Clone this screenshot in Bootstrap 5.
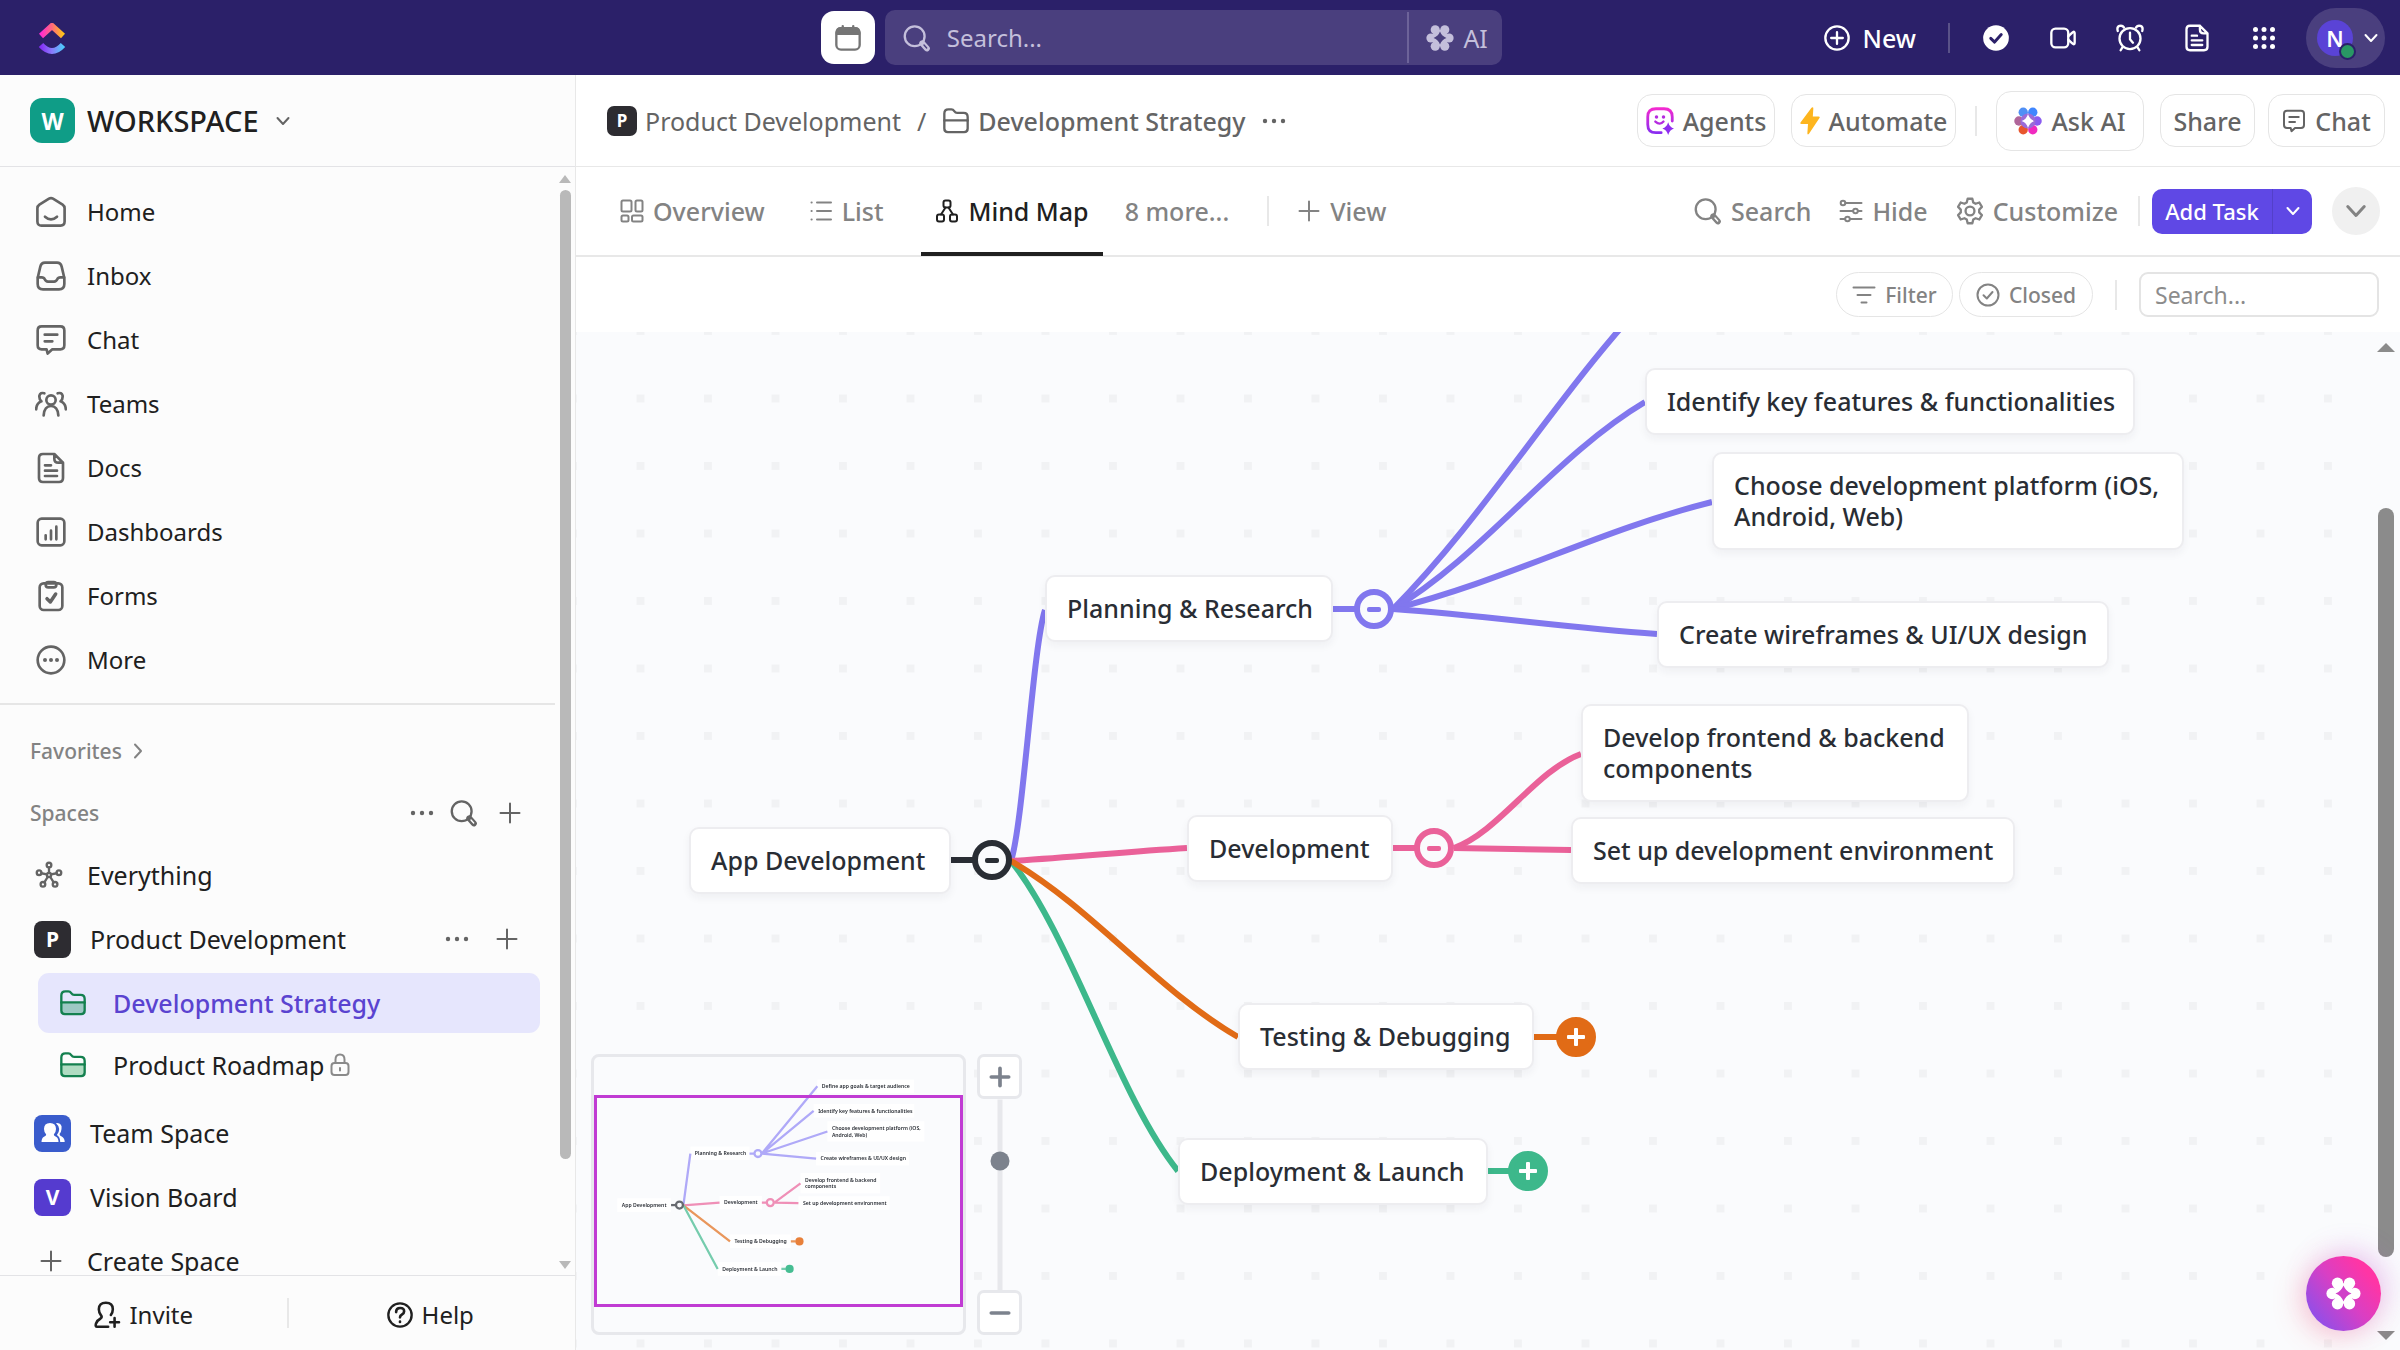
<!DOCTYPE html>
<html lang="en">
<head>
<meta charset="utf-8">
<meta name="viewport" content="width=device-width, initial-scale=1">
<title>Development Strategy | Mind Map</title>
<link href="https://cdn.jsdelivr.net/npm/bootstrap@5.3.0/dist/css/bootstrap.min.css" rel="stylesheet">
<style>
  :root { --ink: #202020; --mid: #646464; --soft: #838383; --line: #e8e8e8; --brand: #5f48e5; }
  body { font-family: "Noto Sans", "Open Sans", sans-serif; font-size: 25px; line-height: 32px; color: var(--ink); background: #fff; }
  a { color: inherit; text-decoration: none; }
  .btn { --bs-btn-font-size: 25px; --bs-btn-line-height: 32px; --bs-btn-padding-x: 0; --bs-btn-padding-y: 0; --bs-btn-color: inherit; --bs-btn-border-width: 0; display: inline-flex; align-items: center; white-space: nowrap; }
  .ico { width: 28px; height: 28px; flex: none; fill: none; stroke: currentColor; stroke-width: 2; stroke-linecap: round; stroke-linejoin: round; }
  .ico-lg { width: 32px; height: 32px; }
  .ico-sm { width: 24px; height: 24px; }
  .ico-xs { width: 16px; height: 16px; }
  .medium { font-weight: 500; }
  .vline { width: 2px; height: 30px; background: var(--line); flex: none; }
  .dim { color: var(--mid); }

  /* top bar */
  .topbar { height: 75px; background: #2b2069; color: #fff; flex: none; }
  .top-left { flex: 0 0 34.2%; padding-left: 36px; }
  .top-mid { flex: 0 0 28.4%; gap: 10px; }
  .top-right { flex: 1 1 0; padding-right: 15px; }
  .cal-btn { width: 54px; height: 53px; border-radius: 13px; background: #fff; color: #757575; justify-content: center; }
  .top-search { height: 55px; border-radius: 10px; background: #4a3f7e; color: #c4bfdb; --core: #4a3f7e; padding-left: 18px; }
  .top-search input { background: none; border: 0; outline: 0; color: inherit; font-size: 24px; min-width: 0; padding: 0; }
  .top-search input::placeholder { color: #c4bfdb; opacity: 1; }
  .ai-btn { height: 51px; border-left: 2px solid #6d6399 !important; border-radius: 0; width: 95px; gap: 9px; padding-left: 17px; color: #c4bfdb; --hole: #4a3f7e; }
  .new-btn { gap: 12px; }
  .top-apps { gap: 39px; }
  .top-apps a { width: 28px; display: flex; justify-content: center; }
  .who { height: 60px; border-radius: 30px; width: 79px; background: #4a3f7e; padding-left: 11px; gap: 6px; }
  .who-face { width: 36px; height: 36px; border-radius: 50%; background: #5a43d6; font-weight: 600; font-size: 22px; position: relative; color: #fff; }
  .who-dot { position: absolute; right: -3px; bottom: -4px; width: 17px; height: 17px; border-radius: 50%; border: 2px solid #2b2069; background: #299764; }

  /* sidebar */
  .side { width: 24%; background: #fcfcfc; border-right: 1px solid var(--line); }
  .side-head { height: 92px; border-bottom: 1px solid #e3e3e6; padding-left: 30px; gap: 12px; font-size: 29px; }
  .tile { width: 37px; height: 37px; border-radius: 8px; color: #fff; font-weight: 700; font-size: 21px; flex: none; display: flex; align-items: center; justify-content: center; }
  .tile-w { width: 45px; height: 45px; border-radius: 12px; background: #0f9d87; font-size: 23px; }
  .tile-p { background: #2d2c31; } .tile-t { background: #3a5ccc; } .tile-v { background: #553bcf; }
  .side-scroll { overflow: hidden; }
  .side-row { height: 64px; padding-left: 35px; gap: 20px; width: 100%; }
  .side-row .ico { color: var(--mid); }
  .side-nav { font-size: 24px; padding-top: 13px; }
  .side-rule { height: 2px; background: #e6e6e6; margin: 11px 0 14px; }
  .side-sec { height: 64px; padding: 0 33px 0 30px; font-size: 21px; color: var(--soft); }
  .side-sec-tight { height: 60px; }
  .side-tools { gap: 16px; color: var(--mid); }
  .space-tools { gap: 26px; padding-right: 36px; }
  .space-row { height: 64px; padding-left: 34px; gap: 19px; }
  .folder-row { height: 60px; margin: 2px 15px 2px 38px; border-radius: 11px; padding-left: 21px; gap: 26px; }
  .folder-row + .space-row { margin-top: 6px; }
  .folder-row.is-open { background: #e6e6fd; color: #5a43d0; }
  .folder-row.is-open .ico-folder { --tint: #9dc8c4; }
  .ico-folder { color: #14804f; --tint: #b0dcc2; }
  .ico-lock { color: #8a8a8a; }
  .side-foot { height: 75px; border-top: 1px solid #e3e3e6; }
  .side-foot .btn { gap: 8px; font-size: 24px; }
  .sb-thin { width: 20px; padding: 8px 4px 6px; gap: 7px; flex: none; }
  .sb-thin .tri { border: 6px solid transparent; border-top: 0; border-bottom: 8px solid #b9b9b9; width: 0; align-self: center; }
  .sb-thin .tri.down { transform: rotate(180deg); margin-top: auto; }
  .sb-thin .thumb { width: 11px; border-radius: 6px; background: #b9b9b9; flex: 0 0 88.6%; align-self: center; }

  /* header */
  .crumb-bar { height: 92px; border-bottom: 1px solid var(--line); padding: 0 15px 0 31px; color: var(--mid); flex: none; }
  .crumb-tools .vline { margin: 0 19px; }
  .tile-xs { width: 30px; height: 30px; font-size: 17px; border-radius: 7px; }
  .pill-btn { height: 53px; border-radius: 15px; background: #fff; color: var(--mid); justify-content: center; gap: 9px; font-weight: 500; }
  .pill-btn.btn { --bs-btn-border-width: 1px; --bs-btn-border-color: #e5e5e5; }
  .pill-tall { height: 60px; }
  .w-agents { width: 138px; } .w-auto2 { width: 165px; } .w-ask { width: 148px; } .w-share { width: 95px; margin-right: 13px; } .w-chat { width: 117px; }

  .tab-bar { height: 90px; border-bottom: 2px solid var(--line); padding: 0 20px 0 30px; color: var(--soft); font-weight: 500; flex: none; }
  .tab-item { height: 90px; padding: 0 14px; display: flex; align-items: center; gap: 9px; white-space: nowrap; }
  .tab-item.active { color: #202020; border-bottom: 4px solid #202020; padding-top: 4px; }
  .tab-tools .btn { color: var(--soft); gap: 9px; font-weight: 500; }
  .add-group .btn { background: var(--brand); color: #fff; height: 45px; font-size: 22px; justify-content: center; }
  .add-group .add-main { width: 121px; border-radius: 10px 0 0 10px; border-right: 1px solid #5340c9; }
  .add-group .add-more { width: 39px; border-radius: 0 10px 10px 0; }
  .round-btn { width: 48px; height: 48px; border-radius: 50%; background: #f0f0f0; justify-content: center; }

  .filter-bar { height: 75px; padding-right: 21px; gap: 6px; color: var(--soft); flex: none; }
  .chip { height: 45px; border-radius: 23px; --bs-btn-border-width: 1px; --bs-btn-border-color: #e5e5e5; gap: 9px; font-size: 21px; font-weight: 500; justify-content: center; color: var(--soft); }
  .chip-a { width: 117px; } .chip-b { width: 134px; }
  .filter-input { width: 240px; height: 45px; border: 2px solid #e4e4e4; border-radius: 9px; font-size: 23px; padding: 0 14px; }
  .filter-input::placeholder { color: #8c8c8c; }

  /* mind map canvas */
  .map { position: relative; overflow: hidden; background-color: #fafbfd; }
  .map-dots, .map-lines { position: absolute; left: 0; top: 0; width: 100%; height: 100%; }
  .node { position: absolute; background: #fff; border: 2px solid #ededf0; border-radius: 10px; box-shadow: 0 4px 8px rgba(40,40,60,.05); padding: 16px 0 16px 20px; line-height: 31px; font-weight: 500; color: #292d34; white-space: nowrap; }
  .n-app { left: 113px; top: 495px; width: 262px; }
  .n-plan { left: 469px; top: 243px; width: 288px; }
  .n-dev { left: 611px; top: 483px; width: 206px; }
  .n-test { left: 662px; top: 671px; width: 296px; }
  .n-deploy { left: 602px; top: 806px; width: 310px; }
  .n-ident { left: 1069px; top: 36px; width: 490px; }
  .n-choose { left: 1136px; top: 120px; width: 472px; }
  .n-wire { left: 1081px; top: 269px; width: 452px; }
  .n-front { left: 1005px; top: 372px; width: 388px; }
  .n-setup { left: 995px; top: 485px; width: 444px; }
  .knot { position: absolute; width: 40px; height: 40px; border-radius: 50%; border: 6px solid var(--c); background: #fafbfd; padding: 0; display: flex; align-items: center; justify-content: center; }
  .knot::before { content: ""; width: 14px; height: 5px; border-radius: 2px; background: var(--c); }
  .knot.full { background: var(--c); }
  .knot.full::before, .knot.full::after { content: ""; position: absolute; width: 18px; height: 4px; background: #fff; border-radius: 1px; }
  .knot.full::after { width: 4px; height: 18px; }
  .c-ink { --c: #292d34; } .c-vio { --c: #8177ee; } .c-pink { --c: #ea6199; } .c-or { --c: #e16b16; } .c-gr { --c: #3db88b; }
  .k-app { left: 396px; top: 508px; } .k-plan { left: 778px; top: 257px; } .k-dev { left: 838px; top: 496px; }
  .k-test { left: 980px; top: 685px; } .k-deploy { left: 932px; top: 819px; }

  .map-dock { position: absolute; left: 15px; bottom: 15px; gap: 11px; }
  .mini { width: 375px; height: 281px; border: 3px solid #e7e8ec; border-radius: 8px; background: #fafbfd; position: relative; overflow: hidden; }
  .mini svg { display: block; width: 100%; height: 100%; filter: blur(.6px); }
  .mini-view { position: absolute; left: 0; right: 0; top: 38px; height: 212px; border: 3px solid #c03bd3; }
  .zoomer { width: 45px; height: 281px; }
  .zoomer .btn { width: 45px; height: 45px; border: 3px solid #e7e8ec; border-radius: 7px; background: #fff; color: #7c828d; justify-content: center; flex: none; }
  .zoomer .btn .ico { stroke-width: 4; width: 22px; height: 22px; }
  .zoom-track { height: 191px; width: 45px; display: flex; align-items: center; justify-content: center; }
  .zoom-range { appearance: none; -webkit-appearance: none; width: 191px; height: 20px; flex: none; transform: rotate(-90deg); background: none; margin: 0; }
  .zoom-range::-webkit-slider-runnable-track { height: 5px; background: #e7e8ec; }
  .zoom-range::-webkit-slider-thumb { -webkit-appearance: none; width: 19px; height: 19px; border-radius: 50%; background: #7c828d; margin-top: -7px; }

  .sb-wide { position: absolute; right: 0; top: 0; bottom: 0; width: 28px; background: #fafbfd; padding: 11px 6px 10px 6px; }
  .sb-wide .tri { border: 9px solid transparent; border-top: 0; border-bottom: 9px solid #8b8b8b; }
  .sb-wide .tri.down { transform: rotate(180deg); margin-top: auto; }
  .sb-wide .thumb { width: 16px; border-radius: 8px; background: #8b8b8b; margin-top: 156px; flex: 0 0 749px; }
  .fab { position: absolute; right: 19px; bottom: 19px; width: 75px; height: 75px; border-radius: 50%; background: linear-gradient(50deg, #8052f0 5%, #d93fc4 50%, #ff35a5 80%); box-shadow: 6px -6px 28px rgba(190,90,230,.25), -6px 6px 28px rgba(255,80,100,.25); color: #fff; justify-content: center; --hole: #d040c8; }
  .fab.btn:hover { background: #d93fc4; }
  .fab .ico { width: 35px; height: 35px; }
</style>
<script src="https://cdn.jsdelivr.net/npm/bootstrap@5.3.0/dist/js/bootstrap.bundle.min.js"></script>
</head>
<body class="vh-100 d-flex flex-column overflow-hidden">

<svg width="0" height="0" class="position-absolute" aria-hidden="true">
  <defs>
    <linearGradient id="gWarm"><stop offset="0" stop-color="#ff2ad1"/><stop offset=".5" stop-color="#ff6a7a"/><stop offset="1" stop-color="#ffc21a"/></linearGradient>
    <linearGradient id="gCool"><stop offset="0" stop-color="#8530f5"/><stop offset=".5" stop-color="#8a7bfc"/><stop offset="1" stop-color="#4fc8fb"/></linearGradient>
    <linearGradient id="gAgent" x1="0" y1="0" x2="0" y2="1"><stop offset="0" stop-color="#f22ad0"/><stop offset="1" stop-color="#8a2df0"/></linearGradient>
    <symbol id="chev" viewBox="0 0 16 16"><path d="M2.500 5 8 11l5.500-6"/></symbol>
    <symbol id="chevr" viewBox="0 0 16 16"><path d="m5 1.500 6 6.500-6 6.500"/></symbol>
    <symbol id="dots" viewBox="0 0 24 24"><g fill="currentColor" stroke="none"><circle cx="3" cy="12" r="2.200"/><circle cx="12" cy="12" r="2.200"/><circle cx="21" cy="12" r="2.200"/></g></symbol>
    <symbol id="plus" viewBox="0 0 24 24"><path d="M12 2.500v19M2.500 12h19"/></symbol>
    <symbol id="minus" viewBox="0 0 24 24"><path d="M2.500 12h19"/></symbol>
    <symbol id="search" viewBox="0 0 24 24"><circle cx="10" cy="10.500" r="8.500"/><path d="m16.500 16.500 4 4.500" stroke-width="5"/><path d="m18 18 2.300 2.600" stroke="var(--core,#fff)" stroke-width="1.200"/></symbol>
    <symbol id="home" viewBox="0 0 24 24"><path d="M1.800 9.200c0-1.200.5-2 1.500-2.700L10.500 2q1.500-.9 3 0l7.200 4.500c1 .7 1.500 1.500 1.500 2.700v10c0 2-1.200 3-3 3H4.800c-1.800 0-3-1-3-3z"/><path d="M7.500 15.500q4.500 4 9 0"/></symbol>
    <symbol id="inbox" viewBox="0 0 24 24"><path d="M4 5q.7-3 3.500-3h9Q19.300 2 20 5l2 8.500V18q0 4-4 4H6q-4 0-4-4v-4.500z"/><path d="M2.200 13H5q1.700 0 2.300 1.500.7 1.700 2.400 1.700h4.600q1.700 0 2.400-1.700Q17.300 13 19 13h2.800"/></symbol>
    <symbol id="chat" viewBox="0 0 24 24"><path d="M5 1.800h14q3 0 3 3V16q0 3-3 3h-6l-3.500 3.200-.8-3.200H5q-3 0-3-3V4.800q0-3 3-3zM7.300 8h9.400M7.300 13H13"/></symbol>
    <symbol id="teams" viewBox="0 0 24 24"><circle cx="12" cy="9" r="3.500"/><path d="M6.500 20.500q.5-7 5.500-7t5.500 7M7 4Q4 3 3.300 5.700 3 8.500 4.800 10 1 11.500.9 16M17 4q3-1 3.700 1.700.3 2.800-1.500 4.300 3.800 1.500 3.900 6"/></symbol>
    <symbol id="doc" viewBox="0 0 24 24"><path d="M6 1.500h8.500L21 8v11.500q0 3-3 3H6q-3 0-3-3v-15q0-3 3-3zM14.500 1.500V5q0 3 3 3H21M7.500 10H12M7.500 14h9M7.500 18h9"/></symbol>
    <symbol id="dash" viewBox="0 0 24 24"><rect x="2" y="2" width="20" height="20" rx="3"/><path d="M8 17.500v-3M12 17.500V11M16 17.500V8"/></symbol>
    <symbol id="form" viewBox="0 0 24 24"><rect x="3.500" y="2.500" width="17" height="20" rx="3"/><rect x="8" y="1.500" width="8" height="4" rx="2"/><path d="m9 14 2.500 2.500 4-6" stroke-width="2.600"/></symbol>
    <symbol id="more" viewBox="0 0 24 24"><circle cx="12" cy="12" r="10"/><g fill="currentColor" stroke="none"><circle cx="7.500" cy="12" r="1.500"/><circle cx="12" cy="12" r="1.500"/><circle cx="16.500" cy="12" r="1.500"/></g></symbol>
    <symbol id="every" viewBox="0 0 24 24"><circle cx="12" cy="12" r="1.800"/><circle cx="12" cy="3.500" r="2"/><circle cx="3.500" cy="10" r="2"/><circle cx="20.500" cy="10" r="2"/><circle cx="6.800" cy="20" r="2"/><circle cx="17.200" cy="20" r="2"/><path d="M12 5.500v4.700M5.400 10.500l4.900 1M18.600 10.500l-4.900 1M8 18.300l3-4.800M16 18.300l-3-4.800"/></symbol>
    <symbol id="folder" viewBox="0 0 24 24"><path d="M2 11.500h20v7q0 3-3 3H5q-3 0-3-3z" fill="var(--tint,none)"/><path d="M2 11.500V5.500Q2 2 5.500 2H8q1.500 0 2.500 1.500T13 5h5.500Q22 5 22 8.500v3"/></symbol>
    <symbol id="lock" viewBox="0 0 24 24"><rect x="3.500" y="10" width="17" height="12" rx="3"/><path d="M7.500 10V6.500q0-5 4.500-5t4.500 5V10M12 15v2.500"/></symbol>
    <symbol id="invite" viewBox="0 0 24 24"><path d="M13 22H3.500Q1.800 22 2.500 19.500q1-3 4-4.500 1.500-1 .5-2.500Q5 10 5 7q0-5.500 6-5.500t6 5.500q0 2.500-1.700 5M18.500 14.500v7.500M14.700 18.200h7.600" stroke-width="2.200"/></symbol>
    <symbol id="help" viewBox="0 0 24 24"><circle cx="12" cy="12" r="10"/><path d="M8.700 9.500q0-3.500 3.500-3.500t3.300 3q0 1.700-1.800 2.500Q12 12.300 12 14M12 17.700v.3" stroke-width="2.300"/></symbol>
    <symbol id="cal" viewBox="0 0 24 24"><rect x="2" y="3.500" width="20" height="18.500" rx="4"/><path d="M2.500 8.500V7q0-3.500 3.500-3.500h12q3.500 0 3.500 3.500v1.500zM7.500 1.800v3M16.500 1.800v3" fill="currentColor"/></symbol>
    <symbol id="flower" viewBox="0 0 24 24"><g fill="currentColor" stroke="none"><circle cx="4.200" cy="12" r="3.900"/><circle cx="19.800" cy="12" r="3.900"/><circle cx="7.900" cy="5" r="3.900"/><circle cx="16.100" cy="5" r="3.900"/><circle cx="7.900" cy="19" r="3.900"/><circle cx="16.100" cy="19" r="3.900"/><circle cx="12" cy="12" r="7"/></g><path d="M12 6.500q1.500 4 5.500 5.500-4 1.500-5.500 5.500Q10.500 13.500 6.500 12q4-1.500 5.500-5.500z" fill="var(--hole)" stroke="none"/></symbol>
    <symbol id="pluscircle" viewBox="0 0 24 24"><circle cx="12" cy="12" r="10"/><path d="M12 7v10M7 12h10"/></symbol>
    <symbol id="donefill" viewBox="0 0 24 24"><circle cx="12" cy="12" r="11" fill="currentColor" stroke="none"/><path d="m7.500 12.300 3.300 3.200L16.500 9" stroke="#2b2069" stroke-width="2.500"/></symbol>
    <symbol id="video" viewBox="0 0 24 24"><rect x="2" y="4" width="14.500" height="16" rx="3.500"/><path d="M16.500 10.500 20.500 7q1.500-1 1.500 1v8q0 2-1.500 1l-4-3.500"/></symbol>
    <symbol id="alarm" viewBox="0 0 24 24"><circle cx="12" cy="12.500" r="9"/><path d="M12 7.500v5.500l2.500 3M1.500 6Q.5 2.500 3 1.700 5.500 1 6.800 3M22.500 6q1-3.500-1.500-4.300Q18.500 1 17.200 3M5.500 20 4 22.500M18.500 20l1.500 2.500"/></symbol>
    <symbol id="grid9" viewBox="0 0 24 24"><g fill="currentColor" stroke="none"><circle cx="3.500" cy="3.500" r="2.500"/><circle cx="12" cy="3.500" r="2.500"/><circle cx="20.500" cy="3.500" r="2.500"/><circle cx="3.500" cy="12" r="2.500"/><circle cx="12" cy="12" r="2.500"/><circle cx="20.500" cy="12" r="2.500"/><circle cx="3.500" cy="20.500" r="2.500"/><circle cx="12" cy="20.500" r="2.500"/><circle cx="20.500" cy="20.500" r="2.500"/></g></symbol>
    <symbol id="overview" viewBox="0 0 24 24"><rect x="1.500" y="1.500" width="10" height="11" rx="1.500"/><rect x="15.500" y="1.500" width="7" height="11" rx="1.500"/><rect x="1.500" y="16.500" width="7" height="6" rx="1.500"/><rect x="12" y="16.500" width="10.500" height="6" rx="1.500"/></symbol>
    <symbol id="list" viewBox="0 0 24 24"><path d="M8 3.500h14M8 12h14M8 20.500h14M2.500 3.500h.2M2.500 12h.2M2.500 20.500h.2"/></symbol>
    <symbol id="mind" viewBox="0 0 24 24"><rect x="8.500" y="1.500" width="7" height="7" rx="2"/><rect x="2" y="15.500" width="7" height="7" rx="2"/><rect x="15" y="15.500" width="7" height="7" rx="2"/><path d="M10.500 8.500 6 15.500M13.500 8.500 18 15.500"/></symbol>
    <symbol id="sliders" viewBox="0 0 24 24"><path d="M6.500 4h16M1.500 12H14M19 12h3.500M1.500 20H6M11 20h11.500"/><circle cx="4" cy="4" r="2.300"/><circle cx="16.500" cy="12" r="2.300"/><circle cx="8.500" cy="20" r="2.300"/></symbol>
    <symbol id="gear" viewBox="0 0 24 24"><circle cx="12" cy="12" r="3.800"/><path d="M10 1.500h4l.8 3.200 2 1.100L20 4.700l2.200 3.800-2.300 2.300v2.400l2.300 2.300-2.200 3.800-3.200-1.100-2 1.100-.8 3.200h-4l-.8-3.200-2-1.100L4 19.300l-2.200-3.800 2.300-2.300v-2.400L1.800 8.500 4 4.700l3.200 1.100 2-1.100z"/></symbol>
    <symbol id="funnel" viewBox="0 0 24 24"><path d="M1.500 4.500h21M5.500 12h13M9.500 19.500h5"/></symbol>
    <symbol id="done" viewBox="0 0 24 24"><circle cx="12" cy="12" r="10.500"/><path d="m7.500 12.300 3.300 3.200L16.500 9"/></symbol>
  </defs>
</svg>

<header class="topbar d-flex align-items-center">
  <div class="top-left">
    <a href="#" aria-label="Home page">
      <svg width="32" height="32" viewBox="0 0 32 32" fill="none" stroke-width="6"><path d="m5 13 11-10 11 10" stroke="url(#gWarm)"/><path d="M5 22q11 12 22 0" stroke="url(#gCool)"/></svg>
    </a>
  </div>
  <div class="top-mid d-flex align-items-center">
    <button class="btn cal-btn" aria-label="Calendar"><svg class="ico"><use href="#cal"/></svg></button>
    <div class="top-search d-flex align-items-center flex-fill">
      <svg class="ico me-3"><use href="#search"/></svg>
      <input type="search" class="flex-fill" placeholder="Search..." aria-label="Search">
      <button class="btn ai-btn"><svg class="ico"><use href="#flower"/></svg>AI</button>
    </div>
  </div>
  <div class="top-right d-flex align-items-center justify-content-end">
    <button class="btn new-btn medium text-white me-4"><svg class="ico"><use href="#pluscircle"/></svg>New</button>
    <span class="vline me-4 ms-2 opacity-25"></span>
    <div class="top-apps d-flex align-items-center me-4 ms-2 pe-1">
      <a href="#" aria-label="My tasks"><svg class="ico"><use href="#donefill"/></svg></a>
      <a href="#" aria-label="Record clip"><svg class="ico"><use href="#video"/></svg></a>
      <a href="#" aria-label="Reminders"><svg class="ico"><use href="#alarm"/></svg></a>
      <a href="#" aria-label="Notepad"><svg class="ico"><use href="#doc"/></svg></a>
      <a href="#" aria-label="Apps"><svg class="ico ico-sm"><use href="#grid9"/></svg></a>
    </div>
    <button class="btn who text-white" aria-label="Account"><span class="who-face d-flex align-items-center justify-content-center">N<span class="who-dot"></span></span><svg class="ico ico-xs ms-1"><use href="#chev"/></svg></button>
  </div>
</header>

<div class="d-flex flex-fill overflow-hidden">
  <aside class="side d-flex flex-column flex-shrink-0">
    <button class="btn side-head medium w-100 rounded-0 text-start flex-shrink-0"><span class="tile tile-w">W</span>WORKSPACE<svg class="ico ico-xs dim ms-1"><use href="#chev"/></svg></button>

    <div class="side-scroll d-flex flex-fill">
      <div class="flex-fill">
        <nav class="side-nav" aria-label="Main">
          <a href="#" class="side-row d-flex align-items-center"><svg class="ico ico-lg"><use href="#home"/></svg>Home</a>
          <a href="#" class="side-row d-flex align-items-center"><svg class="ico ico-lg"><use href="#inbox"/></svg>Inbox</a>
          <a href="#" class="side-row d-flex align-items-center"><svg class="ico ico-lg"><use href="#chat"/></svg>Chat</a>
          <a href="#" class="side-row d-flex align-items-center"><svg class="ico ico-lg"><use href="#teams"/></svg>Teams</a>
          <a href="#" class="side-row d-flex align-items-center"><svg class="ico ico-lg"><use href="#doc"/></svg>Docs</a>
          <a href="#" class="side-row d-flex align-items-center"><svg class="ico ico-lg"><use href="#dash"/></svg>Dashboards</a>
          <a href="#" class="side-row d-flex align-items-center"><svg class="ico ico-lg"><use href="#form"/></svg>Forms</a>
          <a href="#" class="side-row d-flex align-items-center"><svg class="ico ico-lg"><use href="#more"/></svg>More</a>
        </nav>
        <div class="side-rule"></div>
        <div class="side-sec medium d-flex align-items-center gap-2">Favorites<svg class="ico ico-xs"><use href="#chevr"/></svg></div>
        <div class="side-sec side-sec-tight medium d-flex align-items-center">Spaces
          <span class="side-tools d-flex align-items-center ms-auto">
            <svg class="ico ico-sm"><use href="#dots"/></svg><svg class="ico"><use href="#search"/></svg><svg class="ico ico-sm ms-1"><use href="#plus"/></svg>
          </span>
        </div>
        <nav aria-label="Spaces">
          <a href="#" class="side-row d-flex align-items-center"><svg class="ico"><use href="#every"/></svg><span class="ms-1">Everything</span></a>
          <div class="space-row d-flex align-items-center"><span class="tile tile-p">P</span><a href="#">Product Development</a>
            <span class="space-tools dim d-flex align-items-center ms-auto"><svg class="ico ico-sm"><use href="#dots"/></svg><svg class="ico ico-sm"><use href="#plus"/></svg></span>
          </div>
          <a href="#" class="folder-row is-open medium d-flex align-items-center"><svg class="ico ico-folder"><use href="#folder"/></svg>Development Strategy</a>
          <a href="#" class="folder-row d-flex align-items-center"><svg class="ico ico-folder"><use href="#folder"/></svg><span class="d-flex align-items-center gap-1">Product Roadmap<svg class="ico ico-sm ico-lock"><use href="#lock"/></svg></span></a>
          <a href="#" class="space-row d-flex align-items-center"><span class="tile tile-t"><svg width="24" height="24" viewBox="0 0 24 24" fill="#fff"><path d="M16 2q5.500.5 4.500 6-.3 3.500-2 5 0 1.500 2.200 2.500 3 1.500 3 5.500h-4.500q0-5-3.300-7 2.300-3 2.300-6T15 2.200z"/><path d="M9 2q6 0 6 6 0 3.300-2.200 5.500 0 1.500 2.200 2.300 2.500 1.200 2.500 5.200H.5q0-4 2.500-5.200 2.200-.8 2.200-2.300Q3 11.300 3 8q0-6 6-6z"/></svg></span>Team Space</a>
          <a href="#" class="space-row d-flex align-items-center"><span class="tile tile-v">V</span>Vision Board</a>
          <a href="#" class="side-row d-flex align-items-center"><svg class="ico ico-sm ms-1 me-1"><use href="#plus"/></svg>Create Space</a>
        </nav>
      </div>
      <div class="sb-thin d-flex flex-column" aria-hidden="true"><span class="tri"></span><span class="thumb"></span><span class="tri down"></span></div>
    </div>

    <div class="side-foot d-flex align-items-center flex-shrink-0">
      <div class="flex-fill w-50 text-center"><button class="btn"><svg class="ico"><use href="#invite"/></svg>Invite</button></div>
      <span class="vline"></span>
      <div class="flex-fill w-50 text-center"><button class="btn pe-1"><svg class="ico"><use href="#help"/></svg>Help</button></div>
    </div>
  </aside>

  <main class="d-flex flex-column flex-fill overflow-hidden">
    <div class="crumb-bar d-flex align-items-center">
      <span class="tile tile-p tile-xs me-2">P</span><a href="#">Product Development</a>
      <span class="mx-3">/</span>
      <svg class="ico me-2"><use href="#folder"/></svg><a href="#" class="medium">Development Strategy</a>
      <button class="btn ms-3" aria-label="More options"><svg class="ico ico-sm"><use href="#dots"/></svg></button>
      <div class="crumb-tools d-flex align-items-center ms-auto">
        <button class="btn pill-btn w-agents me-3"><svg class="ico" viewBox="0 0 24 24"><path d="M13 22H8.500Q1.500 22 1.500 15V8.500q0-7 7-7h7q7 0 7 7V12" stroke="url(#gAgent)" stroke-width="2.400"/><g fill="#b52be0" stroke="none"><circle cx="9" cy="8.500" r="1.500"/><circle cx="15" cy="8.500" r="1.500"/><path d="M19 13q1.200 4.300 5 5.500-3.800 1.200-5 5.500-1.200-4.300-5-5.500 3.800-1.200 5-5.500z" fill="#8f2df0"/></g><path d="M8 12.500q4 3.500 7 0" stroke="#b52be0"/></svg>Agents</button>
        <button class="btn pill-btn w-auto2"><svg width="20" height="28" viewBox="0 0 20 28" fill="#fdb51e"><path d="M11.500.8Q13.500-.8 13.300 2L12.800 9.500h5.700q2 0 .8 1.700L9 26.800q-1.800 1.700-1.600-1L8 17H1.600Q-.5 17 .7 15.200z"/></svg>Automate</button>
        <span class="vline"></span>
        <button class="btn pill-btn pill-tall w-ask me-3"><svg width="28" height="30" viewBox="0 0 24 24"><g><circle cx="4.200" cy="12" r="4" fill="#b0659a"/><circle cx="19.800" cy="12" r="4" fill="#8a5cf0"/><circle cx="7.900" cy="4.500" r="4" fill="#4f8ff5"/><circle cx="16.100" cy="4.500" r="4" fill="#3f86ff"/><circle cx="7.900" cy="19.500" r="4" fill="#e8562e"/><circle cx="16.100" cy="19.500" r="4" fill="#f02ac0"/><circle cx="12" cy="12" r="6.500" fill="#9a6bd8"/></g><path d="M12 6q1.300 4.700 5.500 6-4.200 1.300-5.500 6-1.300-4.700-5.500-6 4.200-1.300 5.500-6z" fill="#fff"/></svg>Ask AI</button>
        <button class="btn pill-btn w-share">Share</button>
        <button class="btn pill-btn w-chat"><svg class="ico ico-sm"><use href="#chat"/></svg>Chat</button>
      </div>
    </div>

    <div class="tab-bar d-flex align-items-center">
      <nav class="d-flex align-items-center" aria-label="Views">
        <a href="#" class="tab-item"><svg class="ico ico-sm"><use href="#overview"/></svg>Overview</a>
        <a href="#" class="tab-item ms-3"><svg class="ico ico-sm"><use href="#list"/></svg>List</a>
        <a href="#" class="tab-item active ms-4" aria-current="page"><svg class="ico ico-sm"><use href="#mind"/></svg>Mind Map</a>
        <a href="#" class="tab-item ms-2">8 more...</a>
        <span class="vline mx-4"></span>
        <a href="#" class="tab-item ps-1"><svg class="ico ico-sm"><use href="#plus"/></svg>View</a>
      </nav>
      <div class="tab-tools d-flex align-items-center ms-auto">
        <button class="btn me-4 ms-1"><svg class="ico"><use href="#search"/></svg>Search</button>
        <button class="btn me-4 ms-1"><svg class="ico ico-sm"><use href="#sliders"/></svg>Hide</button>
        <button class="btn me-3 ms-1"><svg class="ico"><use href="#gear"/></svg>Customize</button>
        <span class="vline me-2 ms-1"></span>
        <div class="add-group d-flex me-3 ms-1">
          <button class="btn add-main text-white">Add Task</button><button class="btn add-more text-white" aria-label="More task types"><svg class="ico ico-xs"><use href="#chev"/></svg></button>
        </div>
        <button class="btn round-btn ms-1" aria-label="Collapse"><svg class="ico ico-sm"><use href="#chev"/></svg></button>
      </div>
    </div>

    <div class="filter-bar d-flex align-items-center justify-content-end">
      <button class="btn chip chip-a"><svg class="ico ico-sm"><use href="#funnel"/></svg>Filter</button>
      <button class="btn chip chip-b"><svg class="ico ico-sm"><use href="#done"/></svg>Closed</button>
      <span class="vline mx-3"></span>
      <input type="search" class="form-control filter-input" placeholder="Search..." aria-label="Search the map">
    </div>

    <section class="map flex-fill" aria-label="Mind map">
      <svg class="map-dots" aria-hidden="true">
        <defs><pattern id="dotgrid" x="-7" y="-5" width="67.500" height="67.500" patternUnits="userSpaceOnUse"><rect width="8" height="8" fill="#f1f2f4"/></pattern></defs>
        <rect width="100%" height="100%" fill="url(#dotgrid)"/>
      </svg>
      <svg class="map-lines" fill="none" stroke-width="6" aria-hidden="true">
        <g id="links"></g>
        <path d="M374 528h24" stroke="#292d34"/>
        <path d="M757 277h22" stroke="#8177ee"/>
        <path d="M817 516h22" stroke="#ea6199"/>
        <path d="M958 705h24" stroke="#e16b16"/>
        <path d="M912 839h22" stroke="#3db88b"/>
      </svg>

      <div class="node n-app">App Development</div>
      <div class="node n-plan">Planning &amp; Research</div>
      <div class="node n-dev">Development</div>
      <div class="node n-test">Testing &amp; Debugging</div>
      <div class="node n-deploy">Deployment &amp; Launch</div>
      <div class="node n-ident">Identify key features &amp; functionalities</div>
      <div class="node n-choose">Choose development platform (iOS,<br>Android, Web)</div>
      <div class="node n-wire">Create wireframes &amp; UI/UX design</div>
      <div class="node n-front">Develop frontend &amp; backend<br>components</div>
      <div class="node n-setup">Set up development environment</div>

      <button class="knot c-ink k-app" aria-label="Collapse App Development"></button>
      <button class="knot c-vio k-plan" aria-label="Collapse Planning &amp; Research"></button>
      <button class="knot c-pink k-dev" aria-label="Collapse Development"></button>
      <button class="knot full c-or k-test" aria-label="Expand Testing &amp; Debugging"></button>
      <button class="knot full c-gr k-deploy" aria-label="Expand Deployment &amp; Launch"></button>

      <div class="map-dock d-flex">
        <div class="mini">
          <svg viewBox="0 -190 1796 1333" aria-hidden="true">
            <g fill="#fff"><rect x="113" y="495" width="262" height="66"/><rect x="469" y="243" width="288" height="66"/><rect x="611" y="483" width="206" height="66"/><rect x="662" y="671" width="296" height="66"/><rect x="602" y="806" width="310" height="66"/><rect x="1087" y="-83" width="470" height="66"/><rect x="1069" y="36" width="490" height="66"/><rect x="1136" y="120" width="472" height="99"/><rect x="1081" y="269" width="452" height="66"/><rect x="1005" y="372" width="388" height="99"/><rect x="995" y="485" width="444" height="66"/></g>
            <g fill="none" stroke-width="11" opacity=".7">
              <path d="M435 529 469 278M757 277h22M817 277 1087-50M817 277 1069 70M817 277 1136 170M817 277l264 25" stroke="#8f86f5"/><circle cx="798" cy="277" r="17" stroke="#8f86f5"/>
              <path d="M435 529 611 516M817 516h22M878 516l127-94M878 516l117 2" stroke="#ea6199"/><circle cx="858" cy="516" r="17" stroke="#ea6199"/>
              <path d="M435 529 662 705M958 705h24" stroke="#e16b16"/><path d="M435 529 602 839M912 839h22" stroke="#3db88b"/>
              <path d="M375 528h24" stroke="#292d34"/><circle cx="416" cy="528" r="17" stroke="#292d34"/>
            </g>
            <circle cx="1000" cy="705" r="20" fill="#e8803a"/><circle cx="952" cy="839" r="20" fill="#45bd92"/>
            <g font-size="25" font-weight="600" fill="#292d34">
              <text x="135" y="537">App Development</text><text x="491" y="286">Planning &amp; Research</text><text x="633" y="525">Development</text><text x="684" y="714">Testing &amp; Debugging</text><text x="624" y="848">Deployment &amp; Launch</text>
              <text x="1109" y="-41">Define app goals &amp; target audience</text><text x="1091" y="79">Identify key features &amp; functionalities</text><text x="1158" y="163">Choose development platform (iOS,</text><text x="1158" y="196">Android, Web)</text><text x="1103" y="311">Create wireframes &amp; UI/UX design</text><text x="1027" y="416">Develop frontend &amp; backend</text><text x="1027" y="447">components</text><text x="1017" y="528">Set up development environment</text>
            </g>
          </svg>
          <div class="mini-view"></div>
        </div>
        <div class="zoomer d-flex flex-column">
          <button class="btn" aria-label="Zoom in"><svg class="ico"><use href="#plus"/></svg></button>
          <div class="zoom-track"><input type="range" class="zoom-range" min="0" max="100" value="70" aria-label="Zoom level"></div>
          <button class="btn" aria-label="Zoom out"><svg class="ico"><use href="#minus"/></svg></button>
        </div>
      </div>

      <div class="sb-wide d-flex flex-column align-items-center" aria-hidden="true"><span class="tri"></span><span class="thumb"></span><span class="tri down"></span></div>
      <button class="btn fab" aria-label="Ask AI"><svg class="ico"><use href="#flower"/></svg></button>
    </section>
  </main>
</div>

<script>
  // Branch curves: colour, start x/y, end x/y on the canvas, and how far the
  // control points follow the vertical run (small = stronger bend).
  const links = [
    ['#3db88b', 435, 529, 602, 839, .24], ['#8177ee', 435, 529, 469, 278, .15], ['#ea6199', 435, 529, 611, 516, .3], ['#e16b16', 435, 529, 662, 705, .27],
    ['#8177ee', 817, 277, 1087, -50, .3], ['#8177ee', 817, 277, 1069, 70, .26], ['#8177ee', 817, 277, 1136, 170, .27], ['#8177ee', 817, 277, 1081, 302, .27],
    ['#ea6199', 878, 516, 1005, 422, .18], ['#ea6199', 878, 516, 995, 518, .3]
  ];
  document.getElementById('links').innerHTML = links.map(([c, x1, y1, x2, y2, b]) => {
    const dx = (x2 - x1) * .36, dy = (y2 - y1) * b;
    return `<path stroke="${c}" d="M${x1} ${y1}C${x1 + dx} ${y1 + dy} ${x2 - dx} ${y2 - dy} ${x2} ${y2}"/>`;
  }).join('');
</script>
</body>
</html>
